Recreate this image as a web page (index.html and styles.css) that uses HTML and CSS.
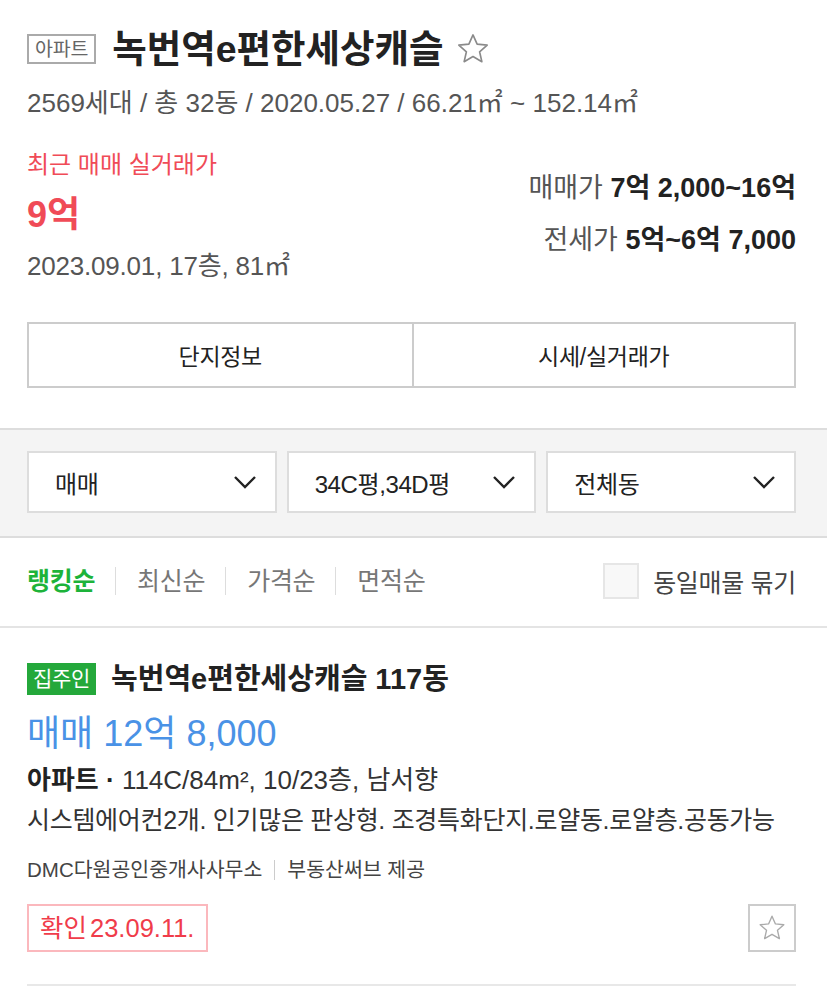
FILE: index.html
```html
<!DOCTYPE html>
<html lang="ko">
<head>
  <meta charset="UTF-8">
  <title>녹번역e편한세상캐슬</title>
  <link rel="stylesheet" href="styles.css">
</head>
<body>

  <div class="summary">
    <div class="title-row">
      <span class="type-badge">아파트</span>
      <h1>녹번역e편한세상캐슬</h1>
      <svg class="fav" width="36" height="36" viewBox="0 0 24 24"><path d="M12 2.6l2.75 6.15 6.7.65-5.05 4.45 1.5 6.6L12 17.05l-5.9 3.4 1.5-6.6-5.05-4.45 6.7-.65z" fill="none" stroke="#8a8a8a" stroke-width="1.1" stroke-linejoin="round"/></svg>
    </div>
    <p class="meta">2569세대 / 총 32동 / 2020.05.27 / 66.21㎡ ~ 152.14㎡</p>

    <div class="price-row">
      <div class="recent">
        <p class="recent-label">최근 매매 실거래가</p>
        <p class="recent-price">9억</p>
        <p class="recent-info">2023.09.01, 17층, 81㎡</p>
      </div>
      <div class="ranges">
        <p>매매가 <b>7억 2,000~16억</b></p>
        <p>전세가 <b>5억~6억 7,000</b></p>
      </div>
    </div>

    <div class="tabs">
      <button>단지정보</button>
      <button>시세/실거래가</button>
    </div>
  </div>

  <div class="filters">
    <div class="select">매매<svg width="24" height="14" viewBox="0 0 24 14"><path d="M2 2l10 10 10-10" fill="none" stroke="#222" stroke-width="2.4"/></svg></div>
    <div class="select">34C평,34D평<svg width="24" height="14" viewBox="0 0 24 14"><path d="M2 2l10 10 10-10" fill="none" stroke="#222" stroke-width="2.4"/></svg></div>
    <div class="select">전체동<svg width="24" height="14" viewBox="0 0 24 14"><path d="M2 2l10 10 10-10" fill="none" stroke="#222" stroke-width="2.4"/></svg></div>
  </div>

  <div class="sort-row">
    <ul class="sort">
      <li class="on">랭킹순</li>
      <li>최신순</li>
      <li>가격순</li>
      <li>면적순</li>
    </ul>
    <label class="group"><span class="box"></span>동일매물 묶기</label>
  </div>

  <div class="item">
    <div class="item-title">
      <span class="owner">집주인</span>
      <h2>녹번역e편한세상캐슬 117동</h2>
    </div>
    <p class="item-price">매매 12억 8,000</p>
    <p class="item-spec"><b>아파트 ·</b> 114C/84m², 10/23층, 남서향</p>
    <p class="item-desc">시스템에어컨2개. 인기많은 판상형. 조경특화단지.로얄동.로얄층.공동가능</p>
    <p class="agent">DMC다원공인중개사사무소<span class="sep"></span>부동산써브 제공</p>
    <div class="item-foot">
      <span class="confirm">확인 23.09.11.</span>
      <span class="star-btn"><svg width="30" height="30" viewBox="0 0 24 24"><path d="M12 2.6l2.75 6.15 6.7.65-5.05 4.45 1.5 6.6L12 17.05l-5.9 3.4 1.5-6.6-5.05-4.45 6.7-.65z" fill="none" stroke="#aaa" stroke-width="1.1" stroke-linejoin="round"/></svg></span>
    </div>
  </div>

</body>
</html>
```

FILE: styles.css
```css
body {
  margin: 0;
  font-family: "Liberation Sans", "Noto Sans CJK KR", sans-serif;
  color: #222;
  background-color: #fff;
}

p {
  margin: 0;
}

.summary {
  padding: 31px 31px 40px 27px;
}

.title-row {
  display: flex;
  align-items: center;
  height: 36px;
}

.type-badge {
  border: 2px solid #aaa;
  color: #666;
  font-size: 19.5px;
  line-height: 26px;
  padding: 0 6px;
  letter-spacing: -0.2px;
}

h1 {
  margin: 0 11px 0 16px;
  font-size: 37.5px;
  font-weight: 700;
  line-height: 36px;
  color: #222;
}

.meta {
  margin-top: 20px;
  font-size: 26px;
  line-height: 32px;
  color: #555;
}

.price-row {
  display: flex;
  justify-content: space-between;
  margin-top: 31px;
}

.recent-label {
  font-size: 24px;
  line-height: 30px;
  color: #f04b57;
}

.recent-price {
  margin-top: 13px;
  font-size: 36px;
  font-weight: 700;
  line-height: 44px;
  color: #f04b57;
}

.recent-info {
  margin-top: 13px;
  font-size: 26px;
  line-height: 32px;
  color: #555;
  letter-spacing: -0.2px;
}

.ranges {
  text-align: right;
  padding-top: 22px;
}

.ranges p {
  font-size: 27px;
  line-height: 32px;
  color: #555;
  margin-bottom: 20px;
}

.ranges b {
  color: #222;
}

.tabs {
  display: grid;
  grid-template-columns: 1fr 1fr;
  margin-top: 40px;
  border: 2px solid #ccc;
}

.tabs button {
  height: 62px;
  border: none;
  background-color: #fff;
  font-family: inherit;
  font-size: 23px;
  color: #222;
  letter-spacing: -0.3px;
}

.tabs button + button {
  border-left: 2px solid #ccc;
}

.filters {
  display: flex;
  gap: 10px;
  padding: 21px 31px 23px 27px;
  background-color: #f4f4f4;
  border-top: 2px solid #ddd;
  border-bottom: 2px solid #ddd;
}

.select {
  flex: 1;
  display: flex;
  align-items: center;
  justify-content: space-between;
  height: 58px;
  padding: 0 18px 0 26px;
  background-color: #fff;
  border: 2px solid #ddd;
  font-size: 24px;
  letter-spacing: -0.4px;
}

.sort-row {
  display: flex;
  justify-content: space-between;
  align-items: center;
  padding: 25px 31px 27px 27px;
  border-bottom: 2px solid #e4e4e4;
}

.sort {
  display: flex;
  list-style: none;
  margin: 0;
  padding: 0;
}

.sort li {
  font-size: 25px;
  line-height: 28px;
  color: #777;
  letter-spacing: -0.3px;
}

.sort li + li {
  margin-left: 20px;
  padding-left: 21px;
  border-left: 1px solid #ddd;
}

.sort li.on {
  color: #1db33a;
  font-weight: 700;
}

.group {
  display: flex;
  align-items: center;
  font-size: 25px;
  color: #444;
  letter-spacing: -0.3px;
}

.box {
  width: 32px;
  height: 32px;
  border: 2px solid #e6e6e6;
  background-color: #f8f8f8;
  margin-right: 14px;
}

.item {
  margin: 0 31px 0 27px;
  padding: 35px 0 32px;
  border-bottom: 2px solid #e8e8e8;
}

.item-title {
  display: flex;
  align-items: center;
}

.owner {
  background-color: #24a83b;
  color: #fff;
  font-size: 21px;
  line-height: 32px;
  padding: 0 6px;
  letter-spacing: -0.3px;
}

h2 {
  margin: 0 0 0 15px;
  font-size: 29px;
  font-weight: 700;
  line-height: 32px;
}

.item-price {
  margin-top: 17px;
  font-size: 36px;
  line-height: 44px;
  color: #4a92e6;
}

.item-spec {
  margin-top: 8px;
  font-size: 26px;
  line-height: 32px;
  color: #333;
}

.item-spec b {
  color: #222;
}

.item-desc {
  margin-top: 8px;
  font-size: 25px;
  line-height: 32px;
  color: #333;
  letter-spacing: -0.3px;
}

.agent {
  display: flex;
  align-items: center;
  margin-top: 21px;
  font-size: 20.5px;
  line-height: 26px;
  color: #444;
}

.sep {
  width: 1px;
  height: 20px;
  background-color: #ccc;
  margin: 0 12px;
}

.item-foot {
  display: flex;
  justify-content: space-between;
  margin-top: 21px;
}

.confirm {
  border: 2px solid #fbb8bd;
  color: #f03c4a;
  font-size: 25.5px;
  line-height: 44px;
  padding: 0 12px 0 11px;
  word-spacing: -4px;
}

.star-btn {
  display: flex;
  align-items: center;
  justify-content: center;
  width: 44px;
  height: 44px;
  border: 2px solid #ccc;
}
```
